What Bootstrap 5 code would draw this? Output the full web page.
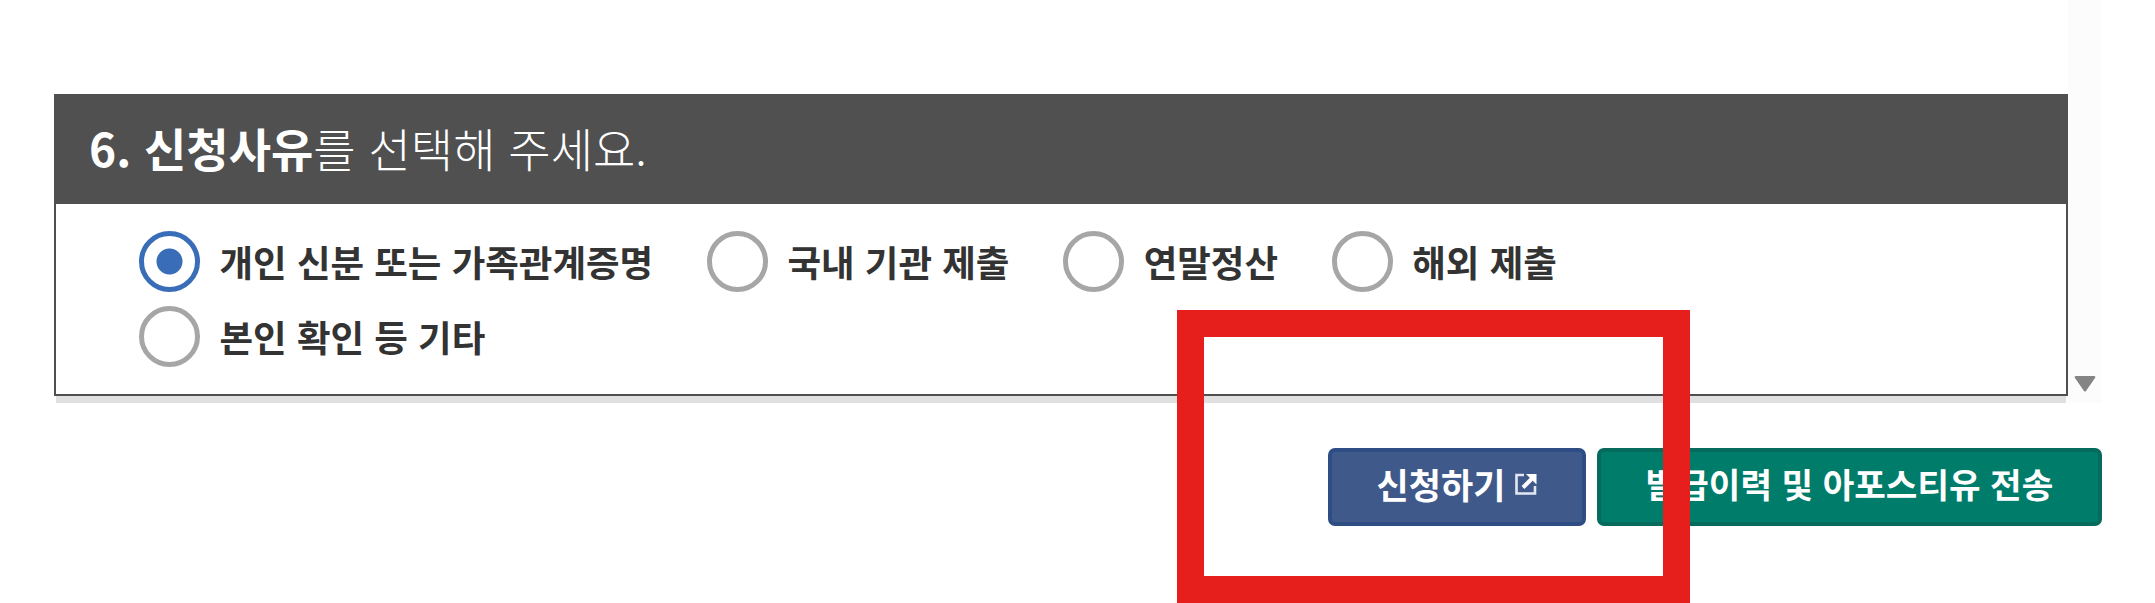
<!doctype html>
<html lang="ko">
<head>
<meta charset="utf-8">
<title>신청사유</title>
<link href="https://cdn.jsdelivr.net/npm/bootstrap@5.3.0/dist/css/bootstrap.min.css" rel="stylesheet">
<style>
html, body { background: #fff; }
body { font-family: "Noto Sans CJK KR", "Noto Sans", sans-serif; color: #333; overflow: hidden; height: 603px; }
.page-wrap { position: relative; width: 2155px; height: 603px; }
.scroll-area { width: 2102px; height: 403px; padding-left: 54px; padding-top: 94px; background: linear-gradient(to right, #fff 2068px, #fcfcfc 2068px); }
.panel-box { width: 2014px; position: relative; }
.panel-head { height: 110px; background: #505050; color: #fff; padding-left: 35px; font-size: 46px; line-height: 106px; font-weight: 300; }
.panel-head b { font-weight: 700; }
.panel-body { height: 192px; border: 2px solid #505050; border-top: 0; padding: 27px 0 0 83px; box-shadow: 0 9px 0 -2px #e0e0e0; }
.reason-row { column-gap: 53.8px; row-gap: 14px; max-width: 1600px; }
.reason-item { margin: 0; padding: 0; min-height: 0; gap: 19.5px; height: 61px; }
.reason-item .form-check-input { float: none; margin: 0; width: 61px; height: 61px; border: 5px solid #a6a6a6; background-color: #fff; flex: none; }
.reason-item .form-check-input:checked[type=radio] { border-color: #3a6db8; background-color: #fff; background-image: radial-gradient(circle, #3a6db8 0 12.5px, transparent 13.5px); }
.reason-item .form-check-label { font-size: 36.5px; font-weight: 700; color: #333; line-height: 56px; white-space: nowrap; }
.scroll-arrow { position: absolute; left: 2074px; top: 376px; }
.action-row { width: 2102px; padding-top: 45px; gap: 11px; }
.action-btn { height: 78px; border-width: 4px; border-style: solid; border-radius: 7px; color: #fff; font-size: 35px; font-weight: 700; padding: 0 0 7px; line-height: 1; }
.action-btn:hover { color: #fff; }
.apply-btn { width: 258px; background: #3f5a8a; border-color: #2f4d85; gap: 10px; }
.apply-btn:hover { background: #3f5a8a; border-color: #2f4d85; }
.send-btn { width: 505px; background: #007c6b; border-color: #066b5c; font-size: 34.3px; }
.send-btn:hover { background: #007c6b; border-color: #066b5c; }
.mark-frame { position: absolute; left: 1177px; top: 310px; width: 513px; height: 293px; border: 27px solid #e61e1c; pointer-events: none; }
</style>
</head>
<body class="m-0">
<div class="page-wrap">
  <div class="scroll-area">
    <div class="panel-box">
      <div class="panel-head"><b>6. 신청사유</b>를 선택해 주세요.</div>
      <div class="panel-body">
        <div class="reason-row d-flex flex-wrap">
          <div class="form-check reason-item d-flex align-items-center">
            <input class="form-check-input" type="radio" name="reason" id="r1" checked>
            <label class="form-check-label" for="r1">개인 신분 또는 가족관계증명</label>
          </div>
          <div class="form-check reason-item d-flex align-items-center">
            <input class="form-check-input" type="radio" name="reason" id="r2">
            <label class="form-check-label" for="r2">국내 기관 제출</label>
          </div>
          <div class="form-check reason-item d-flex align-items-center">
            <input class="form-check-input" type="radio" name="reason" id="r3">
            <label class="form-check-label" for="r3">연말정산</label>
          </div>
          <div class="form-check reason-item d-flex align-items-center">
            <input class="form-check-input" type="radio" name="reason" id="r4">
            <label class="form-check-label" for="r4">해외 제출</label>
          </div>
          <div class="form-check reason-item d-flex align-items-center">
            <input class="form-check-input" type="radio" name="reason" id="r5">
            <label class="form-check-label" for="r5">본인 확인 등 기타</label>
          </div>
        </div>
      </div>
    </div>
    <svg class="scroll-arrow" width="22" height="16" viewBox="0 0 22 16"><path d="M2 0H20Q22 0 21 2L12 15Q11 16 10 15L1 2Q0 0 2 0Z" fill="#848484"/></svg>
  </div>
  <div class="action-row d-flex justify-content-end">
    <button type="button" class="btn action-btn apply-btn d-flex align-items-center justify-content-center">신청하기
      <svg width="22" height="22" viewBox="0 0 22 22" fill="none"><path d="M9 2H1.5V20.5H20V13" stroke="#e4e8f2" stroke-width="2.6"/><path d="M8 14.5L17 5.5" stroke="#fff" stroke-width="4"/><path d="M11 1H21.5V11.5Z" fill="#fff"/></svg>
    </button>
    <button type="button" class="btn action-btn send-btn">발급이력 및 아포스티유 전송</button>
  </div>
  <div class="mark-frame"></div>
</div>
<script src="https://cdn.jsdelivr.net/npm/bootstrap@5.3.0/dist/js/bootstrap.bundle.min.js"></script>
</body>
</html>
